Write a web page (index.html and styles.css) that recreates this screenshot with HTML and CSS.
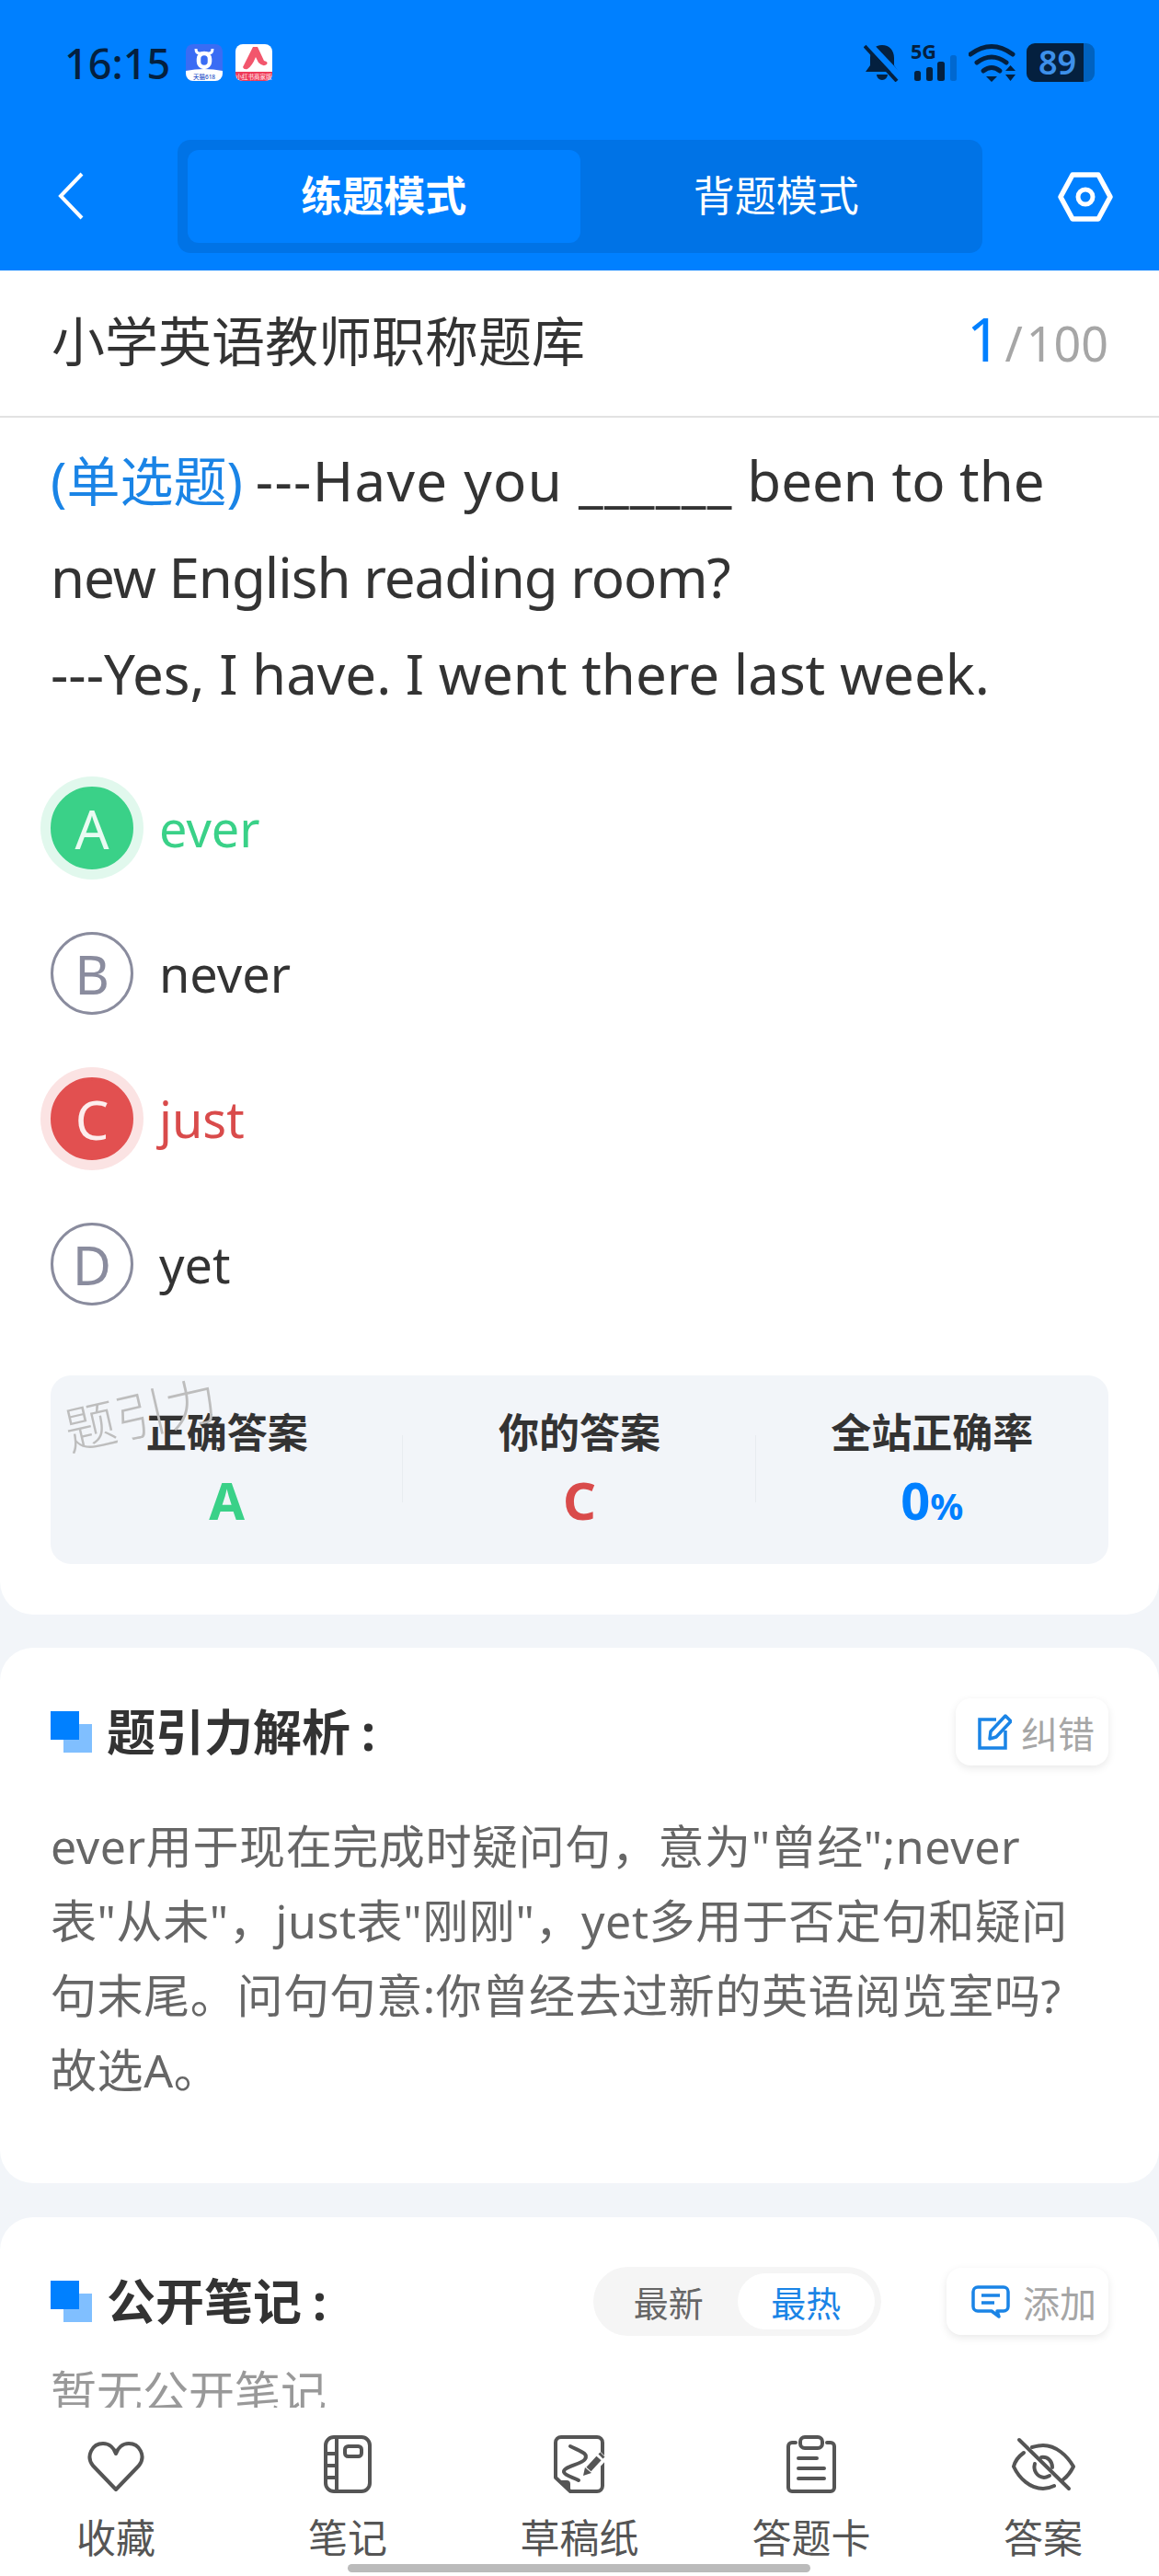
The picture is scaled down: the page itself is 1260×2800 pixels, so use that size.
FILE: index.html
```html
<!DOCTYPE html>
<html lang="zh-CN">
<head>
  <meta charset="UTF-8" />
  <title>小学英语教师职称题库</title>
  <meta name="viewport" content="width=device-width, initial-scale=1.0" />
  <link rel="stylesheet" href="styles.css">
</head>
<body>
  <div class="page">
    <header class="top">
      <div class="status">
        <div class="status-left">
          <span class="time">16:15</span>
          <svg class="app-icon" viewBox="0 0 40 40">
            <rect width="40" height="40" rx="8" fill="#3a6cf4" />
            <path d="M0 29 Q20 25 40 29 V32 a8 8 0 0 1 -8 8 H8 a8 8 0 0 1 -8 -8 Z" fill="#fff" />
            <path d="M11 5 Q11 10 15 10 H25 Q29 10 29 5" fill="none" stroke="#fff" stroke-width="3" />
            <rect x="14" y="10" width="12" height="15" rx="6" fill="none" stroke="#fff" stroke-width="4.5" />
            <text x="20" y="37.5" class="app-text" fill="#2a52c8">天猫618</text>
          </svg>
          <svg class="app-icon" viewBox="0 0 40 40">
            <rect width="40" height="40" rx="8" fill="#fff" />
            <path d="M0 30 H40 V32 a8 8 0 0 1 -8 8 H8 a8 8 0 0 1 -8 -8 Z" fill="#ee3b58" />
            <path d="M8 25 L19 3 H24 L31 18 Q36 19 34 22 Q30 25 25 20 L22 14 Q18 24 13 27 Q9 28 8 25Z" fill="#f2566c" />
            <text x="20" y="37.5" class="app-text" fill="#ffd8de">小红书商家版</text>
          </svg>
        </div>
        <div class="status-right">
          <svg class="bell" viewBox="0 0 40 42">
            <path d="M20 2 C12 2 7 8 7 16 V24 L2 31 H38 L33 24 V16 C33 8 28 2 20 2Z M14 34 A6 6 0 0 0 26 34Z" fill="#04203f" />
            <path d="M4 -1 L40 37" stroke="#0080ff" stroke-width="7" />
            <path d="M1 3 L36 41" stroke="#04203f" stroke-width="4" />
          </svg>
          <svg class="signal" viewBox="0 0 50 42">
            <text x="0" y="17" class="five-g" textLength="28" lengthAdjust="spacingAndGlyphs">5G</text>
            <rect x="4" y="30" width="7" height="11" rx="2.5" fill="#04203f" />
            <rect x="17" y="26" width="7" height="15" rx="2.5" fill="#04203f" />
            <rect x="29" y="20" width="8" height="21" rx="2.5" fill="#04203f" />
            <rect x="43" y="13" width="7" height="28" rx="2.5" fill="#0068d0" />
          </svg>
          <svg class="wifi" viewBox="0 0 52 42">
            <g fill="none" stroke="#04203f" stroke-width="5" stroke-linecap="round">
              <path d="M2 12 Q25 -5 48 12" />
              <path d="M9 21 Q25 9 41 21" />
              <path d="M16 30 Q25 23 34 30" />
            </g>
            <path d="M19 36 H31 L25 42Z M40 30 L45.5 24 L51 30Z M40 34 H51 L45.5 41Z" fill="#04203f" />
          </svg>
          <div class="battery"><span class="battery-num">89</span></div>
        </div>
      </div>
      <nav class="nav">
        <div class="back">
          <svg width="30" height="54" viewBox="0 0 30 54"><path d="M27 2 L4 26 L27 50" fill="none" stroke="#fff" stroke-width="4" /></svg>
        </div>
        <div class="mode-switch">
          <div class="mode active">练题模式</div>
          <div class="mode">背题模式</div>
        </div>
        <svg class="hex" width="60" height="54" viewBox="0 0 60 54">
          <path d="M16 3 H44 L57 27 L44 51 H16 L3 27Z" fill="none" stroke="#fff" stroke-width="5.5" stroke-linejoin="round" />
          <circle cx="30" cy="27" r="8" fill="none" stroke="#fff" stroke-width="5" />
        </svg>
      </nav>
    </header>

    <div class="title-row">
      <div class="bank-title">小学英语教师职称题库</div>
      <div class="counter"><span class="counter-now">1</span><span class="counter-all"><i>/</i>100</span></div>
    </div>

    <main class="scroll">
      <section class="card card-question">
        <p class="question"><span class="q-type">(单选题)</span><span class="wide">---Have you ______</span> been to the<br><span class="tight">new English reading room?</span><br>---Yes, I have. I went there last week.</p>

        <div class="options">
          <div class="option right"><span class="letter">A</span><span class="option-text">ever</span></div>
          <div class="option"><span class="letter">B</span><span class="option-text">never</span></div>
          <div class="option wrong"><span class="letter">C</span><span class="option-text">just</span></div>
          <div class="option"><span class="letter">D</span><span class="option-text">yet</span></div>
        </div>

        <div class="stats">
          <div class="stat">
            <div class="stat-label">正确答案</div>
            <div class="stat-value green">A</div>
          </div>
          <div class="stat">
            <div class="stat-label">你的答案</div>
            <div class="stat-value red">C</div>
          </div>
          <div class="stat">
            <div class="stat-label">全站正确率</div>
            <div class="stat-value blue">0<small>%</small></div>
          </div>
          <div class="watermark">题引力</div>
        </div>
      </section>

      <section class="card card-analysis">
        <div class="card-head">
          <h2 class="card-title"><span class="squares"></span>题引力解析<span class="colon">:</span></h2>
          <button class="mini-btn btn-fix">
            <svg width="37" height="39" viewBox="0 0 37 39">
              <path d="M20 6 H2 V37 H30 V18" fill="none" stroke="#1a84e6" stroke-width="3.5" />
              <path d="M13 27 L14 19 L30 2 L36 8 L20 25Z" fill="none" stroke="#1a84e6" stroke-width="3.5" stroke-linejoin="round" />
            </svg>
            <span>纠错</span>
          </button>
        </div>
        <p class="analysis">ever用于现在完成时疑问句，意为"曾经";never<br>表"从未"，just表"刚刚"，yet多用于否定句和疑问<br>句末尾。问句句意:你曾经去过新的英语阅览室吗?<br>故选A。</p>
      </section>

      <section class="card card-notes">
        <div class="card-head">
          <h2 class="card-title"><span class="squares"></span>公开笔记<span class="colon">:</span></h2>
          <div class="head-tools">
            <div class="sort">
              <span class="sort-item">最新</span>
              <span class="sort-item on">最热</span>
            </div>
            <button class="mini-btn btn-add">
              <svg width="42" height="36" viewBox="0 0 42 36">
                <path d="M7 2 H35 a5 5 0 0 1 5 5 V23 a5 5 0 0 1 -5 5 H28 L30 34 L22 28 H7 a5 5 0 0 1 -5 -5 V7 a5 5 0 0 1 5 -5Z" fill="none" stroke="#1a84e6" stroke-width="3.5" stroke-linejoin="round" />
                <path d="M11 11 H31 M11 19 H25" stroke="#1a84e6" stroke-width="3.5" />
              </svg>
              <span>添加</span>
            </button>
          </div>
        </div>
        <p class="empty">暂无公开笔记</p>
      </section>
    </main>

    <footer class="tabbar">
      <div class="tab">
        <svg width="64" height="63" viewBox="0 0 64 63"><path d="M32 59 L7 33 C-1 23 6 9 18 9 C25 9 30 14 32 20 C34 14 39 9 46 9 C58 9 65 23 57 33Z" class="ico" /></svg>
        <span>收藏</span>
      </div>
      <div class="tab">
        <svg width="52" height="63" viewBox="0 0 52 63">
          <rect x="2" y="2" width="48" height="59" rx="9" class="ico" />
          <path d="M14 2 V61 M2 20 H14 M2 33 H14 M2 46 H14" class="ico" />
          <rect x="23" y="12" width="18" height="11" rx="3.5" class="ico" />
        </svg>
        <span>笔记</span>
      </div>
      <div class="tab">
        <svg width="56" height="63" viewBox="0 0 56 63">
          <path d="M8 2 H47 a6 6 0 0 1 6 6 V55 a6 6 0 0 1 -6 6 H18 L2 46 V8 a6 6 0 0 1 6 -6Z" class="ico" />
          <path d="M3 49 H14 a4 4 0 0 1 4 4 V60Z" fill="#555" />
          <path d="M18 12 C30 18 38 20 34 26 C30 32 10 34 11 40 C12 44 22 46 27 49" class="ico" />
          <path d="M37 39 L54 21" stroke="#fff" stroke-width="13" />
          <path d="M38 37 L49 25" stroke="#555" stroke-width="7" />
          <path d="M51 23 L53 21" stroke="#555" stroke-width="7" />
          <path d="M32 44 L34 35 L41 41Z" fill="#555" />
        </svg>
        <span>草稿纸</span>
      </div>
      <div class="tab">
        <svg width="54" height="63" viewBox="0 0 54 63">
          <path d="M10 8 H6 a4 4 0 0 0 -4 4 V57 a4 4 0 0 0 4 4 H48 a4 4 0 0 0 4 -4 V12 a4 4 0 0 0 -4 -4 H44" class="ico" />
          <rect x="15" y="2" width="24" height="12" rx="5" class="ico" />
          <path d="M13 25 H33 M13 36 H41 M13 47 H41" class="ico" />
        </svg>
        <span>答题卡</span>
      </div>
      <div class="tab">
        <svg width="70" height="63" viewBox="0 0 70 63">
          <path d="M14 19 C7 24 4 30 3 34 C9 47 21 58 35 58 C39 58 43 57 47 55 M23 13 C27 12 31 11 35 11 C49 11 61 22 68 34 C65 40 61 45 57 48" class="ico" />
          <path d="M26 31 C24 38 28 45 36 46 C38 46 40 45 42 44 M33 24 C40 23 45 28 45 35" class="ico" />
          <path d="M9 5 L63 58" class="ico" />
        </svg>
        <span>答案</span>
      </div>
      <div class="home-bar"></div>
    </footer>
  </div>
</body>
</html>
```

FILE: styles.css
```css
* {
  box-sizing: border-box;
}
body {
  margin: 0;
  background: #f2f5f9;
  color: #333;
  font-family: "Noto Sans", "Noto Sans CJK SC", sans-serif;
}
p, h2 {
  margin: 0;
}
.page {
  width: 1260px;
  height: 2800px;
  display: flex;
  flex-direction: column;
  overflow: hidden;
}

/* top blue part */
.top {
  height: 294px;
  flex: none;
  background: #0080ff;
}
.status {
  height: 136px;
  padding: 0 70px 0 70px;
  display: flex;
  align-items: center;
  justify-content: space-between;
}
.status-left {
  display: flex;
  align-items: center;
}
.time {
  width: 132px;
  font-size: 45px;
  font-weight: 500;
  color: #04203f;
}
.app-icon {
  width: 40px;
  height: 40px;
  margin-right: 14px;
}
.app-text {
  font-size: 6.5px;
  text-anchor: middle;
  font-weight: 500;
}
.status-right {
  display: flex;
  align-items: center;
}
.bell {
  width: 40px;
  height: 42px;
}
.signal {
  width: 50px;
  height: 42px;
  margin-left: 11px;
  overflow: visible;
}
.five-g {
  font-size: 22px;
  font-weight: 700;
  fill: #04203f;
}
.wifi {
  width: 52px;
  height: 42px;
  margin-left: 13px;
}
.battery {
  width: 74px;
  height: 42px;
  margin-left: 11px;
  border-radius: 9px;
  background: linear-gradient(90deg, #04203f 84%, #0062c0 84%);
  display: flex;
  align-items: center;
  padding-left: 13px;
}
.battery-num {
  font-size: 36px;
  line-height: 42px;
  font-weight: 600;
  color: #3d90ea;
}
.nav {
  height: 123px;
  margin-top: 16px;
  padding: 0 50px 0 62px;
  display: flex;
  align-items: center;
}
.back {
  width: 131px;
  display: flex;
}
.mode-switch {
  width: 875px;
  height: 123px;
  padding: 11px;
  border-radius: 14px;
  background: #0073e6;
  display: flex;
}
.mode {
  flex: 1;
  padding-bottom: 7px;
  display: flex;
  align-items: center;
  justify-content: center;
  border-radius: 12px;
  color: #fff;
  font-size: 45px;
}
.mode.active {
  background: #0080ff;
  font-weight: 700;
}
.hex {
  margin-left: auto;
}

/* title row */
.title-row {
  height: 160px;
  flex: none;
  padding: 0 55px;
  background: #fff;
  border-bottom: 2px solid #e2e2e2;
  display: flex;
  align-items: center;
  justify-content: space-between;
}
.bank-title {
  padding: 0 0 10px 1px;
  font-size: 58px;
}
.counter {
  padding-bottom: 12px;
  display: flex;
  align-items: baseline;
}
.counter-now {
  font-size: 66px;
  color: #0080ff;
}
.counter-all {
  font-size: 52px;
  color: #a6a6a6;
}
.counter-all i {
  font-style: normal;
  margin: 0 4px 0 4px;
}

/* cards */
.scroll {
  flex: 1;
  overflow: hidden;
}
.card {
  background: #fff;
}
.card-question {
  padding: 16px 55px 55px;
  border-radius: 0 0 36px 36px;
}
.card-analysis {
  margin-top: 36px;
  padding: 55px 55px 82px;
  border-radius: 36px;
}
.card-notes {
  margin-top: 37px;
  padding: 54px 55px 40px;
  border-radius: 36px 36px 0 0;
}
.question {
  font-size: 60px;
  line-height: 105px;
}
.q-type {
  font-size: 58px;
  color: #1a84e6;
  margin-right: 14px;
}
.wide {
  letter-spacing: 1.3px;
}
.tight {
  letter-spacing: -1px;
}

/* options */
.options {
  margin-top: 36px;
}
.option {
  height: 158px;
  display: flex;
  align-items: center;
  font-size: 54px;
}
.letter {
  width: 90px;
  height: 90px;
  flex: none;
  border: 3px solid #8a8c9e;
  border-radius: 50%;
  color: #8a8c9e;
  font-size: 58px;
  display: flex;
  align-items: center;
  justify-content: center;
}
.option-text {
  margin-left: 28px;
}
.right .letter {
  background: #3ad188;
  border-color: #3ad188;
  color: #e9fbf2;
  box-shadow: 0 0 0 11px #e1f8ed;
}
.right .option-text {
  color: #3ad188;
}
.wrong .letter {
  background: #e25050;
  border-color: #e25050;
  color: #fdeeee;
  box-shadow: 0 0 0 11px #fbe3e3;
}
.wrong .option-text {
  color: #d94b4b;
}

/* answer box */
.stats {
  position: relative;
  height: 205px;
  margin-top: 42px;
  border-radius: 22px;
  background: #f2f5f9;
  display: grid;
  grid-template-columns: repeat(3, 1fr);
  align-items: center;
  text-align: center;
}
.stat {
  height: 100%;
  padding-top: 32px;
  position: relative;
}
.stat + .stat::before {
  content: "";
  position: absolute;
  left: -1px;
  top: 65px;
  height: 73px;
  border-left: 1px solid #e8ecf0;
}
.stat-label {
  font-size: 44px;
  line-height: 60px;
  font-weight: 700;
}
.stat-value {
  margin-top: 5px;
  font-size: 56px;
  line-height: 76px;
  font-weight: 700;
}
.stat-value small {
  font-size: 40px;
}
.green { color: #3ad188; }
.red { color: #d94b4b; }
.blue { color: #0080ff; }
.watermark {
  position: absolute;
  left: 14px;
  top: 12px;
  font-size: 56px;
  line-height: 60px;
  color: #bdbdbd;
  font-weight: 300;
  transform: rotate(-13deg);
}

/* card heads */
.card-head {
  min-height: 73px;
  display: flex;
  align-items: center;
  justify-content: space-between;
}
.card-title {
  font-size: 53px;
  line-height: 60px;
  font-weight: 700;
  display: flex;
  align-items: center;
}
.squares {
  width: 45px;
  height: 45px;
  margin-right: 16px;
  background:
    linear-gradient(#0080ff, #0080ff) 0 0 / 31px 31px no-repeat,
    linear-gradient(#80bfff, #80bfff) 14px 14px / 31px 31px no-repeat;
}
.colon {
  margin-left: 12px;
}
.mini-btn {
  height: 73px;
  border: none;
  border-radius: 16px;
  background: #fff;
  box-shadow: 0 3px 10px rgba(0, 0, 0, 0.09);
  display: flex;
  align-items: center;
  font-family: inherit;
  font-size: 40px;
  color: #a6a6a6;
}
.btn-fix {
  width: 166px;
  padding: 0 0 0 24px;
  gap: 10px;
}
.btn-add {
  width: 176px;
  padding: 0 0 0 27px;
  gap: 14px;
}
.analysis {
  margin-top: 48px;
  font-size: 50px;
  line-height: 81px;
  letter-spacing: 0.6px;
  color: #666;
}
.head-tools {
  display: flex;
  align-items: center;
  gap: 71px;
}
.sort {
  width: 313px;
  height: 75px;
  padding: 7px;
  border-radius: 38px;
  background: #f5f5f5;
  display: flex;
}
.sort-item {
  flex: 1;
  border-radius: 31px;
  font-size: 38px;
  color: #666;
  display: flex;
  align-items: center;
  justify-content: center;
}
.sort-item.on {
  background: #fff;
  color: #1a84e6;
}
.empty {
  margin-top: 21px;
  font-size: 50px;
  line-height: 81px;
  color: #999;
}

/* bottom tabs */
.tabbar {
  position: relative;
  height: 183px;
  flex: none;
  padding-top: 30px;
  background: #fff;
  display: grid;
  grid-template-columns: repeat(5, 1fr);
}
.tab {
  display: flex;
  flex-direction: column;
  align-items: center;
  font-size: 43px;
  line-height: 56px;
  color: #555;
}
.tab svg {
  height: 63px;
  margin-bottom: 21px;
}
.ico {
  fill: none;
  stroke: #555;
  stroke-width: 4px;
  stroke-linecap: round;
  stroke-linejoin: round;
}
.home-bar {
  position: absolute;
  left: 378px;
  bottom: 4px;
  width: 503px;
  height: 9px;
  border-radius: 5px;
  background: #bbb;
}
```
